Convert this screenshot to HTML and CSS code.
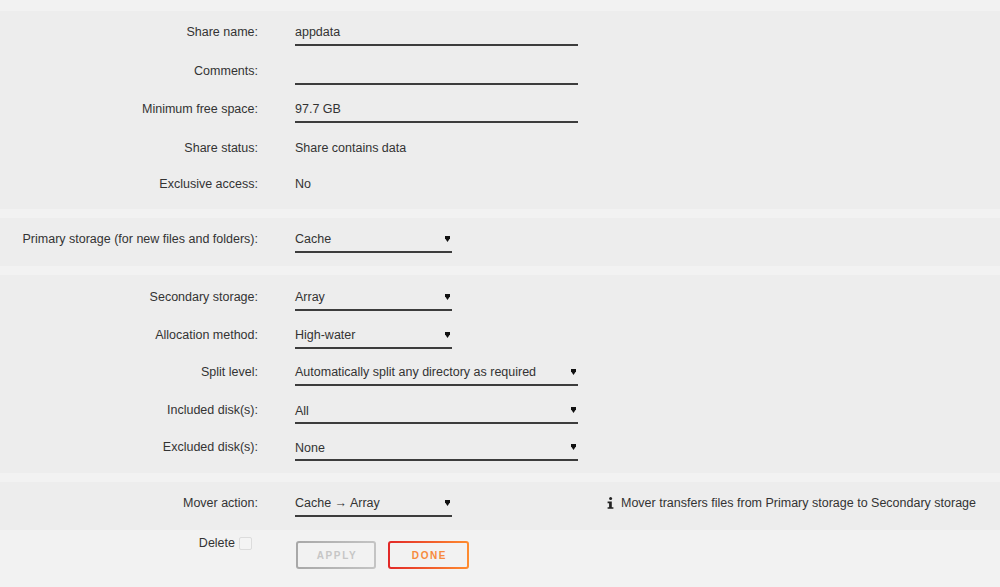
FILE: index.html
```html
<!DOCTYPE html>
<html lang="en">
<head>
    <meta charset="UTF-8">
    <meta name="viewport" content="width=device-width, initial-scale=1.0">
    <title>Share settings</title>
    <link rel="stylesheet" href="styles.css">
</head>
<body>
    <div class="page">
        <section class="panel">
            <div class="row">
                <span class="label">Share name:</span>
                <input class="text" type="text" value="appdata">
            </div>
            <div class="row">
                <span class="label">Comments:</span>
                <input class="text" type="text" value="">
            </div>
            <div class="row">
                <span class="label">Minimum free space:</span>
                <input class="text" type="text" value="97.7 GB">
            </div>
            <div class="row">
                <span class="label">Share status:</span>
                <span class="value">Share contains data</span>
            </div>
            <div class="row">
                <span class="label">Exclusive access:</span>
                <span class="value">No</span>
            </div>
        </section>

        <section class="panel">
            <div class="row">
                <span class="label">Primary storage (for new files and folders):</span>
                <div class="select short"><span>Cache</span><svg class="caret" width="5" height="6" viewBox="0 0 5 6"><path d="M0 0h5v2.2L2.5 6 0 2.2z"/></svg></div>
            </div>
        </section>

        <section class="panel dense">
            <div class="row">
                <span class="label">Secondary storage:</span>
                <div class="select short"><span>Array</span><svg class="caret" width="5" height="6" viewBox="0 0 5 6"><path d="M0 0h5v2.2L2.5 6 0 2.2z"/></svg></div>
            </div>
            <div class="row">
                <span class="label">Allocation method:</span>
                <div class="select short"><span>High-water</span><svg class="caret" width="5" height="6" viewBox="0 0 5 6"><path d="M0 0h5v2.2L2.5 6 0 2.2z"/></svg></div>
            </div>
            <div class="row">
                <span class="label">Split level:</span>
                <div class="select long"><span>Automatically split any directory as required</span><svg class="caret" width="5" height="6" viewBox="0 0 5 6"><path d="M0 0h5v2.2L2.5 6 0 2.2z"/></svg></div>
            </div>
            <div class="row">
                <span class="label">Included disk(s):</span>
                <div class="select long low"><span>All</span><svg class="caret" width="5" height="6" viewBox="0 0 5 6"><path d="M0 0h5v2.2L2.5 6 0 2.2z"/></svg></div>
            </div>
            <div class="row">
                <span class="label">Excluded disk(s):</span>
                <div class="select long low"><span>None</span><svg class="caret" width="5" height="6" viewBox="0 0 5 6"><path d="M0 0h5v2.2L2.5 6 0 2.2z"/></svg></div>
            </div>
        </section>

        <section class="panel">
            <div class="row">
                <span class="label">Mover action:</span>
                <div class="select short"><span>Cache &rarr; Array</span><svg class="caret" width="5" height="6" viewBox="0 0 5 6"><path d="M0 0h5v2.2L2.5 6 0 2.2z"/></svg></div>
                <span class="info">
                    <svg class="info-icon" width="7" height="12" viewBox="0 0 7 12"><circle cx="3.6" cy="1.6" r="1.5"/><path d="M0.6 4.6h4.2v5.6h1.6v1.6H0.6v-1.6h1.5V6.2H0.6z"/></svg>
                    Mover transfers files from Primary storage to Secondary storage
                </span>
            </div>
        </section>

        <div class="footer">
            <label class="delete">Delete <input type="checkbox"></label>
            <div class="buttons">
                <button class="btn apply" type="button" disabled>Apply</button>
                <button class="btn done" type="button">Done</button>
            </div>
        </div>
    </div>
</body>
</html>
```

FILE: styles.css
```css
body {
    margin: 0;
    background: #f2f2f2;
    color: #333;
    font-family: "Liberation Sans", Arial, sans-serif;
    font-size: 12.5px;
}
.page {
    padding-top: 11px;
}
.panel {
    display: flex;
    flex-direction: column;
    gap: 12.5px;
    background: #ededed;
    padding: 9px 0 13px;
    margin-bottom: 9px;
}
.panel.dense {
    gap: 11.5px;
    padding: 10px 0 12px;
}
.panel:last-of-type {
    margin-bottom: 0;
}
.row {
    display: flex;
    align-items: flex-start;
}
.label {
    width: 258px;
    flex: none;
    margin-right: 37px;
    text-align: right;
    padding: 4px 0;
    line-height: 16px;
}
.value {
    padding: 4px 0;
    line-height: 16px;
}
.text, .select {
    box-sizing: border-box;
    height: 26px;
    padding: 4px 0;
    border: 0;
    border-bottom: 2px solid #3c3c3c;
    background: transparent;
    font: inherit;
    line-height: 16px;
    color: #333;
}
.text {
    width: 283px;
    outline: none;
}
.select {
    display: flex;
    align-items: center;
    justify-content: space-between;
    padding-right: 2px;
}
.select.short {
    width: 157px;
}
.select.long {
    width: 283px;
}
.select.low span {
    padding-top: 2px;
}
.caret {
    fill: #111;
}
.info {
    display: flex;
    align-items: center;
    gap: 7px;
    margin-left: 155px;
    padding: 4px 0;
    line-height: 16px;
}
.info-icon {
    fill: #222;
}
.footer {
    display: flex;
    align-items: flex-start;
    padding-top: 5px;
}
.delete {
    width: 252px;
    flex: none;
    margin-right: 44px;
    display: flex;
    align-items: center;
    justify-content: flex-end;
    gap: 4px;
    line-height: 16px;
}
.delete input {
    appearance: none;
    -webkit-appearance: none;
    width: 13px;
    height: 13px;
    margin: 0;
    border: 1px solid #dcdcdc;
    border-radius: 2px;
    background: #f4f4f4;
}
.buttons {
    display: flex;
    gap: 12px;
    margin-top: 6px;
}
.btn {
    width: 80px;
    height: 28px;
    border: 2px solid transparent;
    border-radius: 3px;
    font-family: inherit;
    font-size: 10px;
    font-weight: bold;
    letter-spacing: 1.6px;
    text-transform: uppercase;
    padding: 0 0 0 2px;
}
.apply {
    background: linear-gradient(#f2f2f2, #f2f2f2) padding-box,
        linear-gradient(90deg, #a8a8a8, #c4c4c4) border-box;
    color: #c6c6c6;
}
.done {
    width: 81px;
    background: linear-gradient(#f2f2f2, #f2f2f2) padding-box,
        linear-gradient(90deg, #e22828, #ff8c2f) border-box;
    color: #f78a3c;
}
```
